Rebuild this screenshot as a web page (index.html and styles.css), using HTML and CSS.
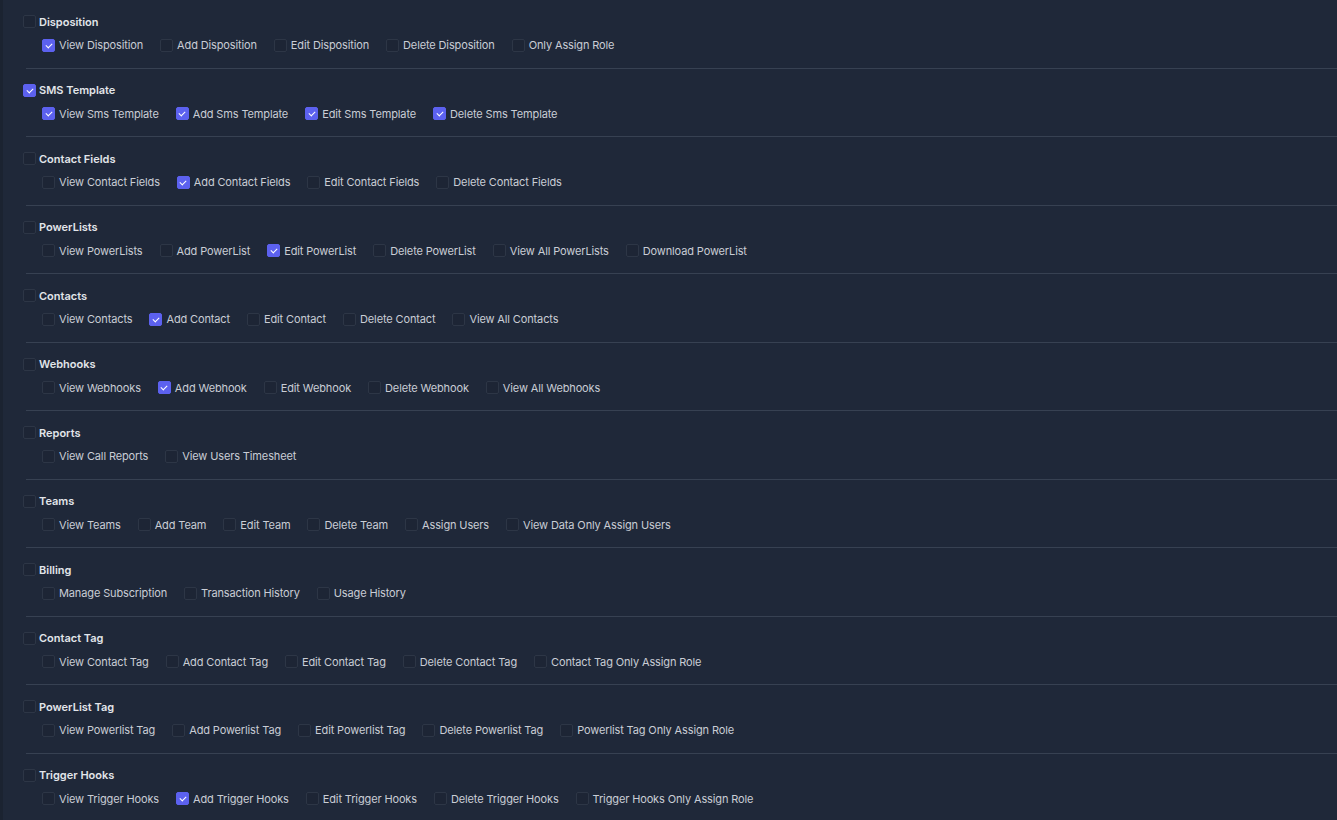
FILE: index.html
```html
<!DOCTYPE html>
<html>
<head>
<meta charset="utf-8">
<link rel="stylesheet" href="styles.css">
</head>
<body>
<div class="page">
  <div class="group">
    <label class="title"><span class="cb"></span>Disposition</label>
    <div class="items">
      <label class="item"><span class="cb on"></span>View Disposition</label>
      <label class="item"><span class="cb"></span>Add Disposition</label>
      <label class="item"><span class="cb"></span>Edit Disposition</label>
      <label class="item"><span class="cb"></span>Delete Disposition</label>
      <label class="item"><span class="cb"></span>Only Assign Role</label>
    </div>
  </div>
  <div class="group">
    <label class="title"><span class="cb on"></span>SMS Template</label>
    <div class="items">
      <label class="item"><span class="cb on"></span>View Sms Template</label>
      <label class="item"><span class="cb on"></span>Add Sms Template</label>
      <label class="item"><span class="cb on"></span>Edit Sms Template</label>
      <label class="item"><span class="cb on"></span>Delete Sms Template</label>
    </div>
  </div>
  <div class="group">
    <label class="title"><span class="cb"></span>Contact Fields</label>
    <div class="items">
      <label class="item"><span class="cb"></span>View Contact Fields</label>
      <label class="item"><span class="cb on"></span>Add Contact Fields</label>
      <label class="item"><span class="cb"></span>Edit Contact Fields</label>
      <label class="item"><span class="cb"></span>Delete Contact Fields</label>
    </div>
  </div>
  <div class="group">
    <label class="title"><span class="cb"></span>PowerLists</label>
    <div class="items">
      <label class="item"><span class="cb"></span>View PowerLists</label>
      <label class="item"><span class="cb"></span>Add PowerList</label>
      <label class="item"><span class="cb on"></span>Edit PowerList</label>
      <label class="item"><span class="cb"></span>Delete PowerList</label>
      <label class="item"><span class="cb"></span>View All PowerLists</label>
      <label class="item"><span class="cb"></span>Download PowerList</label>
    </div>
  </div>
  <div class="group">
    <label class="title"><span class="cb"></span>Contacts</label>
    <div class="items">
      <label class="item"><span class="cb"></span>View Contacts</label>
      <label class="item"><span class="cb on"></span>Add Contact</label>
      <label class="item"><span class="cb"></span>Edit Contact</label>
      <label class="item"><span class="cb"></span>Delete Contact</label>
      <label class="item"><span class="cb"></span>View All Contacts</label>
    </div>
  </div>
  <div class="group">
    <label class="title"><span class="cb"></span>Webhooks</label>
    <div class="items">
      <label class="item"><span class="cb"></span>View Webhooks</label>
      <label class="item"><span class="cb on"></span>Add Webhook</label>
      <label class="item"><span class="cb"></span>Edit Webhook</label>
      <label class="item"><span class="cb"></span>Delete Webhook</label>
      <label class="item"><span class="cb"></span>View All Webhooks</label>
    </div>
  </div>
  <div class="group">
    <label class="title"><span class="cb"></span>Reports</label>
    <div class="items">
      <label class="item"><span class="cb"></span>View Call Reports</label>
      <label class="item"><span class="cb"></span>View Users Timesheet</label>
    </div>
  </div>
  <div class="group">
    <label class="title"><span class="cb"></span>Teams</label>
    <div class="items">
      <label class="item"><span class="cb"></span>View Teams</label>
      <label class="item"><span class="cb"></span>Add Team</label>
      <label class="item"><span class="cb"></span>Edit Team</label>
      <label class="item"><span class="cb"></span>Delete Team</label>
      <label class="item"><span class="cb"></span>Assign Users</label>
      <label class="item"><span class="cb"></span>View Data Only Assign Users</label>
    </div>
  </div>
  <div class="group">
    <label class="title"><span class="cb"></span>Billing</label>
    <div class="items">
      <label class="item"><span class="cb"></span>Manage Subscription</label>
      <label class="item"><span class="cb"></span>Transaction History</label>
      <label class="item"><span class="cb"></span>Usage History</label>
    </div>
  </div>
  <div class="group">
    <label class="title"><span class="cb"></span>Contact Tag</label>
    <div class="items">
      <label class="item"><span class="cb"></span>View Contact Tag</label>
      <label class="item"><span class="cb"></span>Add Contact Tag</label>
      <label class="item"><span class="cb"></span>Edit Contact Tag</label>
      <label class="item"><span class="cb"></span>Delete Contact Tag</label>
      <label class="item"><span class="cb"></span>Contact Tag Only Assign Role</label>
    </div>
  </div>
  <div class="group">
    <label class="title"><span class="cb"></span>PowerList Tag</label>
    <div class="items">
      <label class="item"><span class="cb"></span>View Powerlist Tag</label>
      <label class="item"><span class="cb"></span>Add Powerlist Tag</label>
      <label class="item"><span class="cb"></span>Edit Powerlist Tag</label>
      <label class="item"><span class="cb"></span>Delete Powerlist Tag</label>
      <label class="item"><span class="cb"></span>Powerlist Tag Only Assign Role</label>
    </div>
  </div>
  <div class="group">
    <label class="title"><span class="cb"></span>Trigger Hooks</label>
    <div class="items">
      <label class="item"><span class="cb"></span>View Trigger Hooks</label>
      <label class="item"><span class="cb on"></span>Add Trigger Hooks</label>
      <label class="item"><span class="cb"></span>Edit Trigger Hooks</label>
      <label class="item"><span class="cb"></span>Delete Trigger Hooks</label>
      <label class="item"><span class="cb"></span>Trigger Hooks Only Assign Role</label>
    </div>
  </div>
</div>
</body>
</html>
```
FILE: styles.css
```css
html, body {
  margin: 0;
  padding: 0;
  background: #1f2839;
  height: 820px;
  overflow: hidden;
}
.page {
  font-family: Inter, "Noto Sans", sans-serif;
  font-size: 11px;
  color: #c9cdd5;
  padding-left: 23px;
  border-left: 3px solid #1b2331;
  margin-left: 0;
  box-sizing: border-box;
}
.group {
  padding: 11.5px 0 12.5px;
  border-bottom: 1px solid #374152;
}
.title {
  display: flex;
  align-items: center;
  gap: 4px;
  height: 20px;
  margin-left: -3px;
  font-weight: 600;
  color: #e2e5ea;
}
.title .cb {
  margin-right: -1px;
}
.items {
  display: flex;
  align-items: center;
  gap: 17px;
  margin-top: 3.5px;
  height: 20px;
  padding-left: 16px;
  letter-spacing: -0.13px;
}
.item {
  display: flex;
  align-items: center;
  gap: 4px;
}
.cb {
  width: 13px;
  height: 13px;
  box-sizing: border-box;
  border: 1px solid #2d3646;
  border-radius: 2px;
  background: #1d2535;
  flex: none;
  position: relative;
}
.cb.on {
  background: #5c61ef;
  border-color: #5c61ef;
}
.cb.on::after {
  content: "";
  position: absolute;
  left: 3.5px;
  top: 2px;
  width: 3px;
  height: 5px;
  border: solid #fff;
  border-width: 0 1.5px 1.5px 0;
  transform: rotate(45deg);
}
```
